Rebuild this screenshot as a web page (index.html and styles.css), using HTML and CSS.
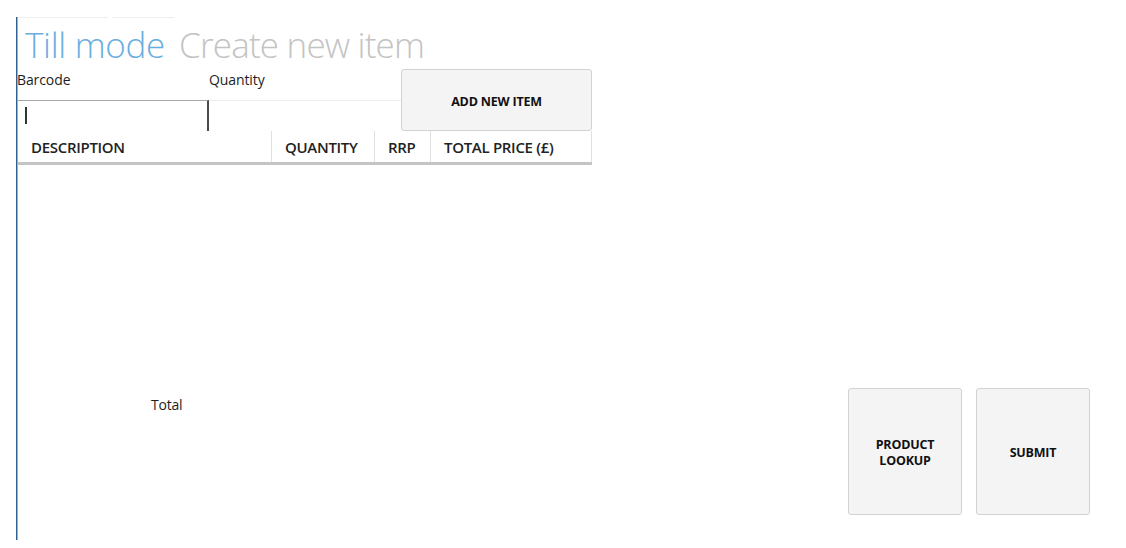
FILE: index.html
```html
<!DOCTYPE html>
<html>
<head>
<meta charset="utf-8">
<link rel="stylesheet" href="styles.css">
</head>
<body>
<div class="app">
  <div class="tabs"><span class="tab tab-a"></span><span class="tab tab-b"></span></div>
  <div class="title">
    <span class="title-active">Till mode</span>
    <span class="title-inactive">Create new item</span>
  </div>
  <div class="form">
    <label class="label label-barcode">Barcode</label>
    <label class="label label-qty">Quantity</label>
    <button class="btn btn-add">ADD NEW ITEM</button>
    <div class="input input-barcode"><span class="caret"></span></div>
    <div class="input input-qty"></div>
  </div>
  <div class="table-head">
    <div class="th th-desc">DESCRIPTION</div>
    <div class="th th-qty">QUANTITY</div>
    <div class="th th-rrp">RRP</div>
    <div class="th th-total">TOTAL PRICE (£)</div>
  </div>
  <div class="table-body"></div>
  <div class="footer">
    <div class="total">Total</div>
    <div class="actions">
      <button class="btn btn-big">PRODUCT<br>LOOKUP</button>
      <button class="btn btn-big">SUBMIT</button>
    </div>
  </div>
</div>
</body>
</html>
```
FILE: styles.css
```css
html, body {
  margin: 0;
  padding: 0;
  background: #fff;
}
body {
  font-family: "Open Sans", "Noto Sans", sans-serif;
  color: #222;
}
.app {
  margin: 17px 0 0 16px;
  height: 523px;
  border-left: 1px solid #2f5f8c;
  box-shadow: inset 1px 0 0 #86bbe6;
  display: flex;
  flex-direction: column;
}
.tabs {
  display: flex;
  gap: 4px;
  height: 1px;
  padding-left: 1px;
}
.tab { display: block; height: 1px; background: #eeeeee; }
.tab-a { width: 90px; }
.tab-b { width: 62px; }
.title {
  display: flex;
  gap: 14px;
  padding: 3px 0 0 8px;
  box-sizing: border-box;
  height: 51px;
  align-items: flex-start;
  font-size: 35px;
  font-weight: 300;
  line-height: 48px;
  letter-spacing: -0.3px;
}
.title-active { color: #6aaede; }
.title-inactive { color: #c3c3c3; letter-spacing: -0.8px; }
.form {
  display: grid;
  grid-template-columns: 191px 192px 191px;
  grid-template-rows: 31px 31px;
  padding-left: 1px;
}
.label {
  font-size: 14px;
  line-height: 20px;
  padding-top: 1px;
  color: #1e1e1e;
  letter-spacing: -0.1px;
}
.label-barcode { grid-column: 1; grid-row: 1; margin-left: -1px; }
.label-qty { grid-column: 2; grid-row: 1; }
.btn {
  font-family: "Open Sans", "Noto Sans", sans-serif;
  background: #f4f4f4;
  border: 1px solid #d2d2d2;
  border-radius: 3px;
  font-weight: 700;
  font-size: 12.5px;
  color: #111;
  letter-spacing: -0.2px;
  padding: 3px 0 0 0;
  cursor: pointer;
}
.btn-add {
  grid-column: 3;
  grid-row: 1 / span 2;
}
.input {
  border-top: 1px solid #a8a8a8;
  height: 31px;
  box-sizing: border-box;
}
.input-barcode {
  grid-column: 1;
  grid-row: 2;
  border-right: 2px solid #4a4a4a;
  padding: 6px 0 0 7px;
}
.input-qty {
  grid-column: 2;
  grid-row: 2;
  border-top-color: #eeeeee;
}
.caret {
  display: block;
  width: 2px;
  height: 17px;
  background: #333;
}
.table-head {
  display: flex;
  width: 574px;
  height: 34px;
  box-sizing: border-box;
  margin-left: 1px;
  border-bottom: 3px solid #c4c4c4;
}
.th {
  font-size: 15px;
  font-weight: 600;
  letter-spacing: -0.3px;
  color: #222;
  padding: 2px 0 0 13px;
  line-height: 29px;
  box-sizing: border-box;
  border-right: 1px solid #e0e0e0;
}
.th-desc { width: 254px; }
.th-qty { width: 103px; }
.th-rrp { width: 56px; }
.th-total { width: 161px; }
.table-body {
  height: 223px;
}
.footer {
  display: flex;
  justify-content: space-between;
  padding-right: 36px;
}
.total {
  font-size: 14px;
  padding: 7px 0 0 134px;
  letter-spacing: -0.2px;
  color: #1e1e1e;
}
.actions {
  display: flex;
  gap: 14px;
}
.btn-big {
  width: 114px;
  height: 127px;
  line-height: 16px;
}
```
